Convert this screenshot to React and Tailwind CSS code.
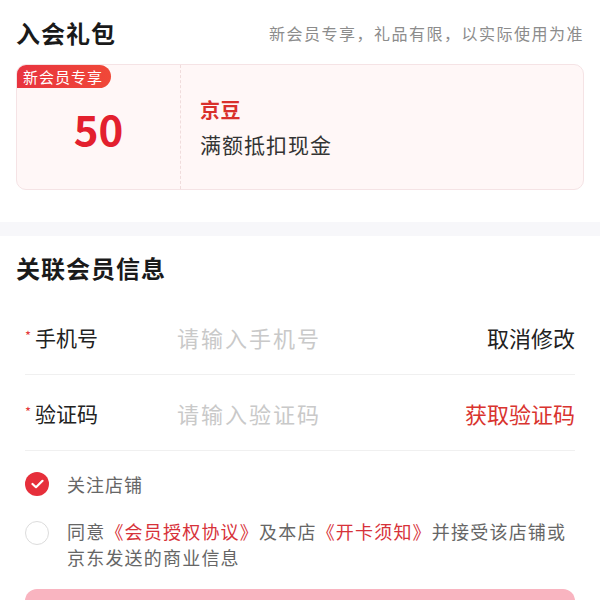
import React from "react";

export default function App() {
  return (
    <div className="w-full bg-white font-['Noto_Sans_CJK_SC',sans-serif]">
      {/* 入会礼包 */}
      <div className="px-4 pt-[18px] pb-8">
        <div className="flex h-[30px] items-center justify-between">
          <div className="text-[24px] font-bold leading-[30px] tracking-[1px] text-[#1a1a1a]">入会礼包</div>
          <div className="text-[16px] leading-[30px] tracking-[1.5px] text-[#8c8c8c]">新会员专享，礼品有限，以实际使用为准</div>
        </div>
        <div className="relative mt-4 flex h-[126px] overflow-hidden rounded-[10px] border border-[#f5e3e5] bg-[#fff7f7]">
          <div className="absolute left-0 top-0 flex h-[23px] items-center rounded-r-full bg-gradient-to-r from-[#e8333f] to-[#f04838] pl-[6px] pr-[8px] text-[15px] leading-[23px] tracking-[1px] text-white">
            新会员专享
          </div>
          <div className="flex w-[164px] items-center justify-center border-r border-dashed border-[#f0dcdc] pt-[2px]">
            <span className="text-[42px] font-bold leading-none text-[#e3202e]">50</span>
          </div>
          <div className="flex flex-col justify-center pl-[19px]">
            <div className="text-[20px] font-bold leading-[28px] tracking-[0.5px] text-[#d9302c]">京豆</div>
            <div className="mt-[5px] text-[21px] leading-[30px] tracking-[1px] text-[#333333]">满额抵扣现金</div>
          </div>
        </div>
      </div>

      <div className="h-[14px] bg-[#f7f7fa]" />

      {/* 关联会员信息 */}
      <div className="px-4 pt-[17px]">
        <div className="text-[24px] font-bold leading-[30px] tracking-[1px] text-[#1a1a1a]">关联会员信息</div>
        <div className="mt-4 px-[9px]">
          <div className="flex h-[76px] items-center border-b border-[#f0f0f0]">
            <div className="flex h-[30px] w-[152px] items-start">
              <span className="mr-[4px] mt-[7px] text-[13px] leading-none text-[#e4393c]">*</span>
              <span className="text-[21px] leading-[30px] text-[#222222]">手机号</span>
            </div>
            <div className="flex-1 text-[22px] leading-[30px] tracking-[2px] text-[#c9c9c9]">请输入手机号</div>
            <div className="text-[22px] leading-[30px] text-[#222222]">取消修改</div>
          </div>
          <div className="flex h-[76px] items-center border-b border-[#f0f0f0]">
            <div className="flex h-[30px] w-[152px] items-start">
              <span className="mr-[4px] mt-[7px] text-[13px] leading-none text-[#e4393c]">*</span>
              <span className="text-[21px] leading-[30px] text-[#222222]">验证码</span>
            </div>
            <div className="flex-1 text-[22px] leading-[30px] tracking-[2px] text-[#c9c9c9]">请输入验证码</div>
            <div className="text-[22px] leading-[30px] text-[#d9342f]">获取验证码</div>
          </div>
        </div>

        <div className="px-[9px]">
          <div className="mt-5 flex h-[26px] items-center">
            <div className="flex h-[24px] w-[24px] items-center justify-center rounded-full bg-[#e62f3b]">
              <svg width="13" height="10" viewBox="0 0 13 10" fill="none">
                <path d="M1.5 5 L5 8.2 L11.5 1.8" stroke="white" strokeWidth="2.2" strokeLinecap="round" strokeLinejoin="round" />
              </svg>
            </div>
            <div className="ml-[18px] text-[18px] leading-[26px] tracking-[1px] text-[#666666]">关注店铺</div>
          </div>

          <div className="mt-[21px] flex items-start">
            <div className="mt-[3px] h-[24px] w-[24px] shrink-0 rounded-full border border-[#dcdcdc] bg-white" />
            <div className="ml-[18px] text-[18px] leading-[26px] tracking-[1.2px] text-[#666666]">
              同意<span className="text-[#d7323a]">《会员授权协议》</span>及本店<span className="text-[#d7323a]">《开卡须知》</span>并接受该店铺或
              <br />
              京东发送的商业信息
            </div>
          </div>

          <div className="mt-[19px] h-[50px] rounded-[12px] bg-[#f9b4c0]" />
        </div>
      </div>
    </div>
  );
}
